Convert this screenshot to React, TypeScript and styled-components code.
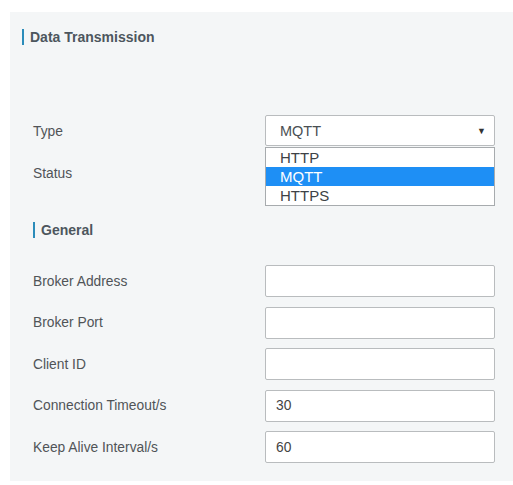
import React from "react";
import styled, { createGlobalStyle } from "styled-components";

const GlobalStyle = createGlobalStyle`
  html, body {
    margin: 0;
    padding: 0;
    background: #ffffff;
  }
  body {
    font-family: "Liberation Sans", Arial, sans-serif;
  }
`;

const Page = styled.div`
  width: 513px;
  height: 485px;
  padding: 12px 0 0 10px;
  box-sizing: border-box;
`;

const Panel = styled.div`
  background: #f4f6f7;
  height: 469px;
  box-sizing: border-box;
  padding: 17px 18px 0 12px;
  display: flex;
  flex-direction: column;
`;

const SectionTitle = styled.div<{ $indent?: number }>`
  display: flex;
  align-items: center;
  height: 16px;
  margin-left: ${(p) => p.$indent ?? 0}px;
  font-size: 14px;
  font-weight: bold;
  color: #4d565e;

  &::before {
    content: "";
    width: 2px;
    height: 16px;
    background: #2b8cba;
    margin-right: 6px;
  }
`;

const Fields = styled.div<{ $top: number; $gap?: number }>`
  display: flex;
  flex-direction: column;
  gap: ${(p) => p.$gap ?? 10}px;
  padding-left: 11px;
  margin-top: ${(p) => p.$top}px;
`;

const Row = styled.div`
  display: flex;
  align-items: center;
  justify-content: space-between;
  height: 32px;
`;

const Label = styled.span`
  font-size: 13.8px;
  color: #505457;
`;

const Control = styled.div`
  position: relative;
  width: 230px;
  height: 32px;
`;

const Input = styled.input`
  width: 100%;
  height: 100%;
  box-sizing: border-box;
  border: 1px solid #b9bcbe;
  border-radius: 2px;
  background: #fff;
  padding: 0 10px;
  font-family: "Liberation Sans", Arial, sans-serif;
  font-size: 13.8px;
  color: #444;
  outline: none;
`;

const SelectBox = styled.div`
  height: 31px;
  box-sizing: border-box;
  border: 1px solid #b9bcbe;
  border-radius: 2px;
  background: #fff;
  padding: 0 8px 0 14px;
  display: flex;
  align-items: center;
  justify-content: space-between;
  font-size: 14.5px;
  color: #4a4f53;
`;

const Arrow = styled.span`
  font-size: 9px;
  color: #333;
`;

const Menu = styled.ul`
  position: absolute;
  top: 32px;
  left: 0;
  width: 100%;
  box-sizing: border-box;
  margin: 0;
  padding: 0;
  list-style: none;
  background: #fff;
  border: 1px solid #a7abae;
  z-index: 2;
`;

const Option = styled.li<{ $active?: boolean }>`
  height: 19px;
  line-height: 19px;
  padding-left: 14px;
  font-size: 15px;
  color: ${(p) => (p.$active ? "#fff" : "#3d4246")};
  background: ${(p) => (p.$active ? "#1e8ff5" : "transparent")};
`;

const fields = [
  { label: "Broker Address", value: "" },
  { label: "Broker Port", value: "" },
  { label: "Client ID", value: "" },
  { label: "Connection Timeout/s", value: "30" },
  { label: "Keep Alive Interval/s", value: "60" },
];

const App: React.FC = () => {
  return (
    <Page>
      <GlobalStyle />
      <Panel>
        <SectionTitle>Data Transmission</SectionTitle>
        <Fields $top={70}>
          <Row>
            <Label>Type</Label>
            <Control>
              <SelectBox>
                MQTT
                <Arrow>▼</Arrow>
              </SelectBox>
              <Menu>
                <Option>HTTP</Option>
                <Option $active>MQTT</Option>
                <Option>HTTPS</Option>
              </Menu>
            </Control>
          </Row>
          <Row>
            <Label>Status</Label>
          </Row>
        </Fields>
        <Fields $top={33}>
          <SectionTitle>General</SectionTitle>
        </Fields>
        <Fields $top={27} $gap={9.6}>
          {fields.map((f) => (
            <Row key={f.label}>
              <Label>{f.label}</Label>
              <Control>
                <Input defaultValue={f.value} />
              </Control>
            </Row>
          ))}
        </Fields>
      </Panel>
    </Page>
  );
};

export default App;
